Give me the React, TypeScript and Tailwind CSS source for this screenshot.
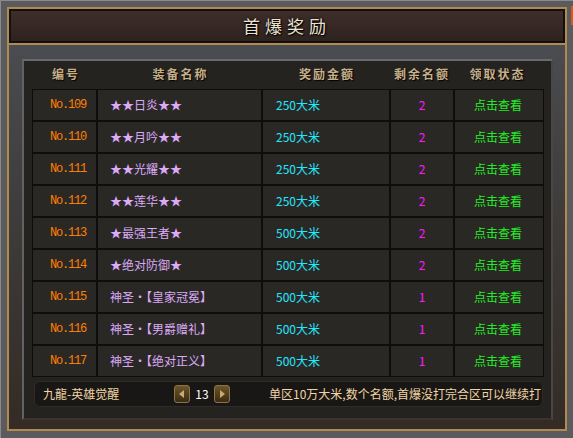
import { useState } from "react";

type Row = { no: number; name: string; amount: string; left: number };

const ROWS: Row[] = [
    { no: 109, name: "★★日炎★★", amount: "250大米", left: 2 },
    { no: 110, name: "★★月吟★★", amount: "250大米", left: 2 },
    { no: 111, name: "★★光耀★★", amount: "250大米", left: 2 },
    { no: 112, name: "★★莲华★★", amount: "250大米", left: 2 },
    { no: 113, name: "★最强王者★", amount: "500大米", left: 2 },
    { no: 114, name: "★绝对防御★", amount: "500大米", left: 2 },
    { no: 115, name: "神圣·【皇家冠冕】", amount: "500大米", left: 1 },
    { no: 116, name: "神圣·【男爵赠礼】", amount: "500大米", left: 1 },
    { no: 117, name: "神圣·【绝对正义】", amount: "500大米", left: 1 },
];

const HEADERS = ["编号", "装备名称", "奖励金额", "剩余名额", "领取状态"];

const cell = "bg-[#2a2825] h-[30px] flex items-center";

function PageButton({ dir }: { dir: "left" | "right" }) {
    return (
        <button className="w-[16px] h-[18px] rounded-[3px] border border-[#8c7446] bg-gradient-to-b from-[#6e5628] to-[#3a2b12] flex items-center justify-center">
            <svg width="6" height="8" viewBox="0 0 6 8">
                {dir === "left"
                    ? <path d="M5 0 L0 4 L5 8 Z" fill="#c9ab72" />
                    : <path d="M1 0 L6 4 L1 8 Z" fill="#c9ab72" />}
            </svg>
        </button>
    );
}

export default function App() {
    const [page] = useState(13);

    return (
        <div className="relative w-[573px] h-[438px] bg-[#5b5b5d] border-l border-t border-[#8a8a8c] pl-[6px] pt-[6px] pr-[6px] pb-[7px] font-['Noto_Sans_CJK_SC',sans-serif] overflow-hidden">
            <div className="absolute right-0 top-[5px] w-[2px] h-[19px] bg-[#d8581e]" />
            <div className="h-full border-2 border-[#b08a4e] flex flex-col bg-[#111]">
                {/* title */}
                <div className="h-[34px] border-2 border-[#121010] bg-gradient-to-b from-[#3f2e2a] to-[#2e221f] flex items-center justify-center">
                    <span className="text-[17px] tracking-[5px] text-[#ebe2cf] [text-shadow:1px_1px_1px_#000,0_0_3px_#000]">首爆奖励</span>
                </div>
                <div className="h-[2px] bg-[#b08a4e]" />

                {/* body */}
                <div className="flex-1 bg-gradient-to-b from-[#4a4c51] via-[#3d3a38] to-[#342b25] pl-[13px] pr-[12px] pt-[14px] pb-[9px]">
                    <div className="h-full border-2 border-t-[#6a6a6c] border-l-[#626264] border-r-[#4a4644] border-b-[#3a332e] bg-[#25231f] pl-[8px] pr-[5px]">
                        {/* header */}
                        <div className="grid grid-cols-[64px_165px_128px_62px_89px] h-[28px] items-center pl-[1px] pb-[3px]">
                            {HEADERS.map((h) => (
                                <div key={h} className="text-center whitespace-nowrap text-[12px] font-bold tracking-[2px] pl-[2px] text-[#c6b08a] [text-shadow:1px_1px_1px_#000]">
                                    {h}
                                </div>
                            ))}
                        </div>

                        {/* table */}
                        <div className="grid grid-cols-[63px_163px_126px_62px_88px] gap-[2px] p-[1px] bg-[#0e0d0c] w-fit">
                            {ROWS.map((r) => (
                                <div key={r.no} className="contents text-[12px]">
                                    <div className={`${cell} justify-center pl-[7px] text-[#ff8000] font-['Liberation_Mono',monospace] text-[12px] tracking-[-1.2px]`}>No.{r.no}</div>
                                    <div className={`${cell} pl-[12px] text-[#dcaaf8]`}>{r.name}</div>
                                    <div className={`${cell} pl-[13px] text-[#22e8ff]`}>{r.amount}</div>
                                    <div className={`${cell} justify-center text-[#ff18ff]`}>{r.left}</div>
                                    <div className={`${cell} justify-center text-[#22f022] text-[12px] pr-[2px]`}>点击查看</div>
                                </div>
                            ))}
                        </div>

                        {/* footer bar */}
                        <div className="mt-[4px] ml-[2px] mr-[3px] h-[26px] rounded-[6px] bg-[#191715] border border-[#2e2b28] flex items-center pl-[8px] pr-[1px] text-[12px] text-[#f0d4a4]">
                            <span className="w-[131px]">九龍-英雄觉醒</span>
                            <PageButton dir="left" />
                            <span className="w-[24px] text-center text-white text-[12px]">{page}</span>
                            <PageButton dir="right" />
                            <span className="ml-auto">单区10万大米,数个名额,首爆没打完合区可以继续打</span>
                        </div>
                    </div>
                </div>
            </div>
        </div>
    );
}
